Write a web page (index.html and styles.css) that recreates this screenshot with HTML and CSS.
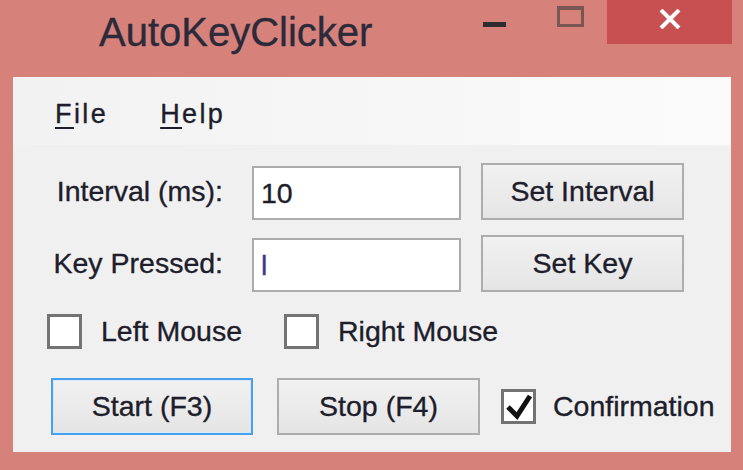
FILE: index.html
```html
<!DOCTYPE html>
<html>
<head>
<meta charset="utf-8">
<title>AutoKeyClicker</title>
<link rel="stylesheet" href="styles.css">
</head>
<body>
<div class="window">
  <div class="titlebar">
    <div class="title">AutoKeyClicker</div>
    <div class="ctl-min"></div>
    <div class="ctl-max"></div>
    <div class="ctl-close">
      <svg width="22" height="20" viewBox="0 0 22 20"><path d="M2 1 L20 19 M20 1 L2 19" stroke="#ffffff" stroke-width="4" fill="none"/></svg>
    </div>
  </div>
  <div class="client">
    <div class="menubar">
      <span class="menu-item"><u>F</u>ile</span>
      <span class="menu-item"><u>H</u>elp</span>
    </div>
    <div class="form">
      <div class="grid">
        <div class="lbl">Interval (ms):</div>
        <div class="textbox">10</div>
        <div class="btn">Set Interval</div>
        <div class="lbl">Key Pressed:</div>
        <div class="textbox"><span class="keychar">l</span></div>
        <div class="btn">Set Key</div>
      </div>
      <div class="checks">
        <div class="check-item check-left"><span class="box"></span><span class="check-text">Left Mouse</span></div>
        <div class="check-item"><span class="box"></span><span class="check-text">Right Mouse</span></div>
      </div>
      <div class="actions">
        <div class="btn btn-start">Start (F3)</div>
        <div class="btn btn-stop">Stop (F4)</div>
        <div class="check-item check-confirm">
          <span class="box"><svg width="29" height="29" viewBox="0 0 29 29"><path d="M4 15 L13 24 L26 4" stroke="#111111" stroke-width="5" fill="none"/></svg></span>
          <span class="check-text">Confirmation</span>
        </div>
      </div>
    </div>
  </div>
</div>
</body>
</html>
```
FILE: styles.css
```css
html, body {
  margin: 0;
  padding: 0;
}
body {
  background: #d6817a;
  font-family: "Liberation Sans", Arial, sans-serif;
  color: #1d1d2b;
  -webkit-text-stroke: 0.35px currentColor;
}
.window {
  width: 743px;
  height: 470px;
  display: flex;
  flex-direction: column;
  background: #d6817a;
}
.titlebar {
  height: 77px;
  display: flex;
  align-items: flex-start;
  flex-shrink: 0;
}
.title {
  flex: 1;
  margin-left: 99px;
  margin-top: 12px;
  font-size: 40px;
  line-height: 40px;
  color: #2b2a3a;
}
.ctl-min {
  width: 23px;
  height: 5px;
  margin-top: 22px;
  background: #2d2d2d;
}
.ctl-max {
  box-sizing: border-box;
  width: 27px;
  height: 21px;
  margin-left: 51px;
  margin-top: 6px;
  border: 3px solid #7a5652;
  border-top-width: 4px;
}
.ctl-close {
  width: 125px;
  height: 44px;
  margin-left: 23px;
  margin-right: 11px;
  background: #c85050;
  display: flex;
  align-items: center;
  justify-content: center;
}
.ctl-close svg {
  margin-top: -6px;
}
.client {
  margin: 0 12px 0 13px;
  height: 375px;
  background: #f0f0f0;
}
.menubar {
  box-sizing: border-box;
  height: 68px;
  padding-top: 6px;
  padding-left: 42px;
  display: flex;
  align-items: center;
  gap: 52px;
  background: linear-gradient(to right, #f2f2f2, #fbfbfb);
}
.menu-item {
  font-size: 27px;
  line-height: 30px;
  letter-spacing: 2.4px;
}
.menu-item u {
  text-decoration-thickness: 2px;
  text-underline-offset: 4px;
}
.form {
  padding-top: 18px;
  font-size: 28.5px;
}
.grid {
  display: grid;
  grid-template-columns: 219px 209px 203px;
  grid-auto-rows: 57px;
  column-gap: 20px;
  row-gap: 15px;
}
.lbl {
  text-align: right;
  line-height: 57px;
  padding-right: 9px;
  white-space: nowrap;
}
.textbox {
  box-sizing: border-box;
  height: 54px;
  margin-top: 3px;
  border: 2px solid #acacac;
  background: #ffffff;
  padding-left: 7px;
  line-height: 50px;
  color: #1d1d2b;
}
.keychar {
  color: #3a3a8c;
}
.btn {
  box-sizing: border-box;
  height: 57px;
  border: 2px solid #adadad;
  background: linear-gradient(to bottom, #f1f1f1, #e5e5e5);
  display: flex;
  align-items: center;
  justify-content: center;
  white-space: nowrap;
}
.checks {
  margin-top: 22px;
  padding-left: 34px;
  display: flex;
  align-items: center;
  height: 35px;
}
.check-item {
  display: flex;
  align-items: center;
  gap: 19px;
  white-space: nowrap;
}
.check-left {
  margin-right: 42px;
}
.box {
  box-sizing: border-box;
  width: 35px;
  height: 35px;
  border: 3px solid #737373;
  background: #ffffff;
  display: block;
}
.box svg {
  display: block;
}
.actions {
  margin-top: 29px;
  padding-left: 38px;
  display: flex;
  align-items: center;
}
.btn-start {
  width: 202px;
  border-color: #4aa0ea;
  box-shadow: inset 0 0 0 1px #d4e9fb;
}
.btn-stop {
  width: 203px;
  margin-left: 24px;
}
.check-confirm {
  margin-left: 21px;
  gap: 17px;
}
```
